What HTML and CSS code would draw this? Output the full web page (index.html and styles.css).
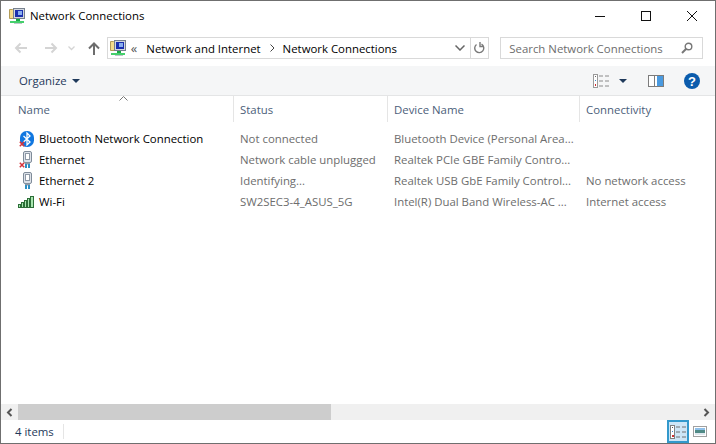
FILE: index.html
```html
<!DOCTYPE html>
<html lang="en">
<head>
    <meta charset="UTF-8">
    <title>Network Connections</title>
    <link rel="stylesheet" href="styles.css">
</head>
<body>
    <svg class="defs" width="0" height="0">
        <symbol id="netfolder" viewBox="0 0 16 16">
            <path d="M0.500 1.500h3l1 1h3v8h-7z" fill="#f5dc8a" stroke="#b39c58"/>
            <rect x="4.500" y="0.500" width="11" height="10" fill="#d3d8de" stroke="#77818e"/>
            <rect x="6" y="2" width="8" height="7" fill="#1a2fae"/>
            <rect x="9" y="3" width="4" height="4" fill="#8aaeee"/>
            <rect x="7" y="11" width="4" height="2" fill="#18a843"/>
            <rect x="1" y="13" width="14" height="2" fill="#45cf6c"/>
            <rect x="5" y="15" width="8" height="1" fill="#bfc5cb"/>
        </symbol>
        <symbol id="plug" viewBox="0 0 16 17">
            <rect x="5.500" y="0.500" width="8" height="11" rx="1.500" fill="#dde2e9" stroke="#7f8b99"/>
            <rect x="7.500" y="2.500" width="4" height="6" fill="#fff" stroke="#8e99a6"/>
            <rect x="7" y="11.500" width="5" height="2" fill="#8e99a6"/>
            <rect x="7" y="13" width="2" height="4" fill="#2d8fc4"/>
            <rect x="10" y="13" width="2" height="4" fill="#2d8fc4"/>
        </symbol>
        <symbol id="redx" viewBox="0 0 6 6">
            <path d="M0.800 0.800l4.400 4.400M5.200 0.800l-4.400 4.400" stroke="#d5333c" stroke-width="1.500" fill="none"/>
        </symbol>
    </svg>

    <div class="window">
        <header class="titlebar">
            <svg class="app-icon" width="16" height="16"><use href="#netfolder"/></svg>
            <span class="title">Network Connections</span>
            <div class="caption">
                <svg width="46" height="30" viewBox="0 0 46 30"><path d="M18 15.500h10" stroke="#111"/></svg>
                <svg width="46" height="30" viewBox="0 0 46 30"><rect x="18.500" y="10.500" width="9" height="9" fill="none" stroke="#111"/></svg>
                <svg width="46" height="30" viewBox="0 0 46 30"><path d="M18 10l10 10M28 10l-10 10" stroke="#111" fill="none"/></svg>
            </div>
        </header>

        <nav class="navbar">
            <div class="nav-buttons">
                <svg width="14" height="12" viewBox="0 0 14 12"><path d="M13 6H2M6.500 1.500L2 6l4.500 4.500" stroke="#d4d4d4" stroke-width="2" fill="none"/></svg>
                <svg width="14" height="12" viewBox="0 0 14 12"><path d="M1 6h11M7.500 1.500L12 6l-4.500 4.500" stroke="#d4d4d4" stroke-width="2" fill="none"/></svg>
                <svg width="7" height="5" viewBox="0 0 7 5"><path d="M0.500 0.500L3.500 3.500L6.500 0.500" stroke="#d4d4d4" stroke-width="1.300" fill="none"/></svg>
                <svg width="12" height="13" viewBox="0 0 12 13"><path d="M6 13V2M1 6.500L6 1.500l5 5" stroke="#6d6d6d" stroke-width="2" fill="none"/></svg>
            </div>
            <div class="address">
                <svg class="address-icon" width="16" height="16"><use href="#netfolder"/></svg>
                <span class="crumb-more">&laquo;</span>
                <span class="crumb crumb-first">Network and Internet</span>
                <svg class="crumb-sep" width="5" height="8" viewBox="0 0 5 8"><path d="M0.500 0.500L4 4L0.500 7.500" stroke="#444" fill="none"/></svg>
                <span class="crumb">Network Connections</span>
                <svg class="address-drop" width="10" height="6" viewBox="0 0 10 6"><path d="M0.500 0.500L5 5l4.500-4.500" stroke="#666" stroke-width="1.500" fill="none"/></svg>
                <div class="refresh">
                    <svg width="11" height="12" viewBox="0 0 11 12"><path d="M7.500 2.200A4.500 4.500 0 1 1 2.500 2.500M6 0v4.500h4" stroke="#7a7a7a" stroke-width="1.400" fill="none"/></svg>
                </div>
            </div>
            <div class="search">
                <span>Search Network Connections</span>
                <svg width="12" height="12" viewBox="0 0 12 12"><circle cx="7.500" cy="4.500" r="3.300" stroke="#777" stroke-width="1.400" fill="none"/><path d="M5 7L1 11" stroke="#777" stroke-width="2"/></svg>
            </div>
        </nav>

        <div class="toolbar">
            <button class="organize">Organize <span class="caret"></span></button>
            <div class="tools">
                <svg class="views" width="17" height="14" viewBox="0 0 17 14">
                    <rect x="0.500" y="0.500" width="4" height="13" fill="#fff" stroke="#9a9a9a"/>
                    <rect x="2" y="2" width="1" height="1" fill="#666"/>
                    <rect x="2" y="6" width="1" height="1" fill="#3a8ad0"/>
                    <rect x="2" y="10" width="1" height="2" fill="#d03030"/>
                    <path d="M6 2h4M12 2h4M6 7h4M12 7h4M6 12h4M12 12h4" stroke="#8a8a8a"/>
                </svg>
                <span class="caret views-caret"></span>
                <svg class="pane" width="16" height="12" viewBox="0 0 16 12">
                    <rect x="0.500" y="0.500" width="15" height="11" fill="#fff" stroke="#7c7c7c"/>
                    <rect x="9" y="1" width="6" height="10" fill="#4a9ae0"/>
                    <path d="M6.500 1v10" stroke="#7c7c7c"/>
                </svg>
                <svg class="help" width="16" height="16" viewBox="0 0 16 16">
                    <circle cx="8" cy="8" r="8" fill="#0b5cad"/>
                    <text x="8" y="12.500" text-anchor="middle" class="help-mark">?</text>
                </svg>
            </div>
        </div>

        <div class="columns">
            <div class="col col-name">Name
                <svg class="sort" width="9" height="5" viewBox="0 0 9 5"><path d="M0.500 4.500L4.500 0.500l4 4" stroke="#777" fill="none"/></svg>
            </div>
            <div class="col col-status">Status</div>
            <div class="col col-device">Device Name</div>
            <div class="col col-conn">Connectivity</div>
        </div>

        <main class="list">
            <div class="row">
                <div class="cell-name">
                    <span class="row-icon">
                        <svg width="14" height="16" viewBox="0 0 14 16">
                            <rect x="0" y="0" width="14" height="16" rx="6.500" fill="#1177e0"/>
                            <path d="M3.500 5l6.500 6-3 3V2l3 3-6.500 6" stroke="#fff" stroke-width="1.300" fill="none"/>
                        </svg>
                        <svg class="x" width="6" height="6"><use href="#redx"/></svg>
                    </span>
                    <span class="name">Bluetooth Network Connection</span>
                </div>
                <div class="cell-status">Not connected</div>
                <div class="cell-device">Bluetooth Device (Personal Area...</div>
                <div class="cell-conn"></div>
            </div>
            <div class="row">
                <div class="cell-name">
                    <span class="row-icon">
                        <svg width="16" height="17"><use href="#plug"/></svg>
                        <svg class="x" width="6" height="6"><use href="#redx"/></svg>
                    </span>
                    <span class="name">Ethernet</span>
                </div>
                <div class="cell-status">Network cable unplugged</div>
                <div class="cell-device">Realtek PCIe GBE Family Contro...</div>
                <div class="cell-conn"></div>
            </div>
            <div class="row">
                <div class="cell-name">
                    <span class="row-icon">
                        <svg width="16" height="17"><use href="#plug"/></svg>
                    </span>
                    <span class="name">Ethernet 2</span>
                </div>
                <div class="cell-status">Identifying...</div>
                <div class="cell-device">Realtek USB GbE Family Control...</div>
                <div class="cell-conn">No network access</div>
            </div>
            <div class="row">
                <div class="cell-name">
                    <span class="row-icon">
                        <svg class="wifi" width="16" height="12" viewBox="0 0 16 12">
                            <g fill="#a8e6b0" stroke="#2c6e38">
                                <rect x="0.500" y="8.500" width="2" height="3"/>
                                <rect x="3.500" y="6.500" width="2" height="5"/>
                                <rect x="6.500" y="4.500" width="2" height="7"/>
                                <rect x="9.500" y="2.500" width="2" height="9"/>
                                <rect x="12.500" y="0.500" width="3" height="11"/>
                            </g>
                        </svg>
                    </span>
                    <span class="name">Wi-Fi</span>
                </div>
                <div class="cell-status">SW2SEC3-4_ASUS_5G</div>
                <div class="cell-device">Intel(R) Dual Band Wireless-AC ...</div>
                <div class="cell-conn">Internet access</div>
            </div>
        </main>

        <div class="hscroll">
            <div class="scroll-btn">
                <svg width="7" height="9" viewBox="0 0 7 9"><path d="M5.500 1L2 4.500 5.500 8" stroke="#555" stroke-width="2" fill="none"/></svg>
            </div>
            <div class="scroll-thumb"></div>
            <div class="scroll-track"></div>
            <div class="scroll-btn">
                <svg width="7" height="9" viewBox="0 0 7 9"><path d="M1.500 1L5 4.500 1.500 8" stroke="#555" stroke-width="2" fill="none"/></svg>
            </div>
        </div>

        <footer class="statusbar">
            <span class="count">4 items</span>
            <div class="view-switch">
                <div class="view-btn active">
                    <svg width="16" height="14" viewBox="0 0 16 14">
                        <rect x="0.500" y="0.500" width="4" height="13" fill="#fff" stroke="#808080"/>
                        <rect x="2" y="2" width="1" height="1" fill="#555"/>
                        <rect x="2" y="6" width="1" height="1" fill="#3a8ad0"/>
                        <rect x="2" y="10" width="2" height="2" fill="#d03030"/>
                        <path d="M6 2h4M12 2h4M6 7h4M12 7h4M6 12h4M12 12h4" stroke="#707070"/>
                    </svg>
                </div>
                <div class="view-btn">
                    <svg width="14" height="11" viewBox="0 0 14 11">
                        <rect x="0.500" y="0.500" width="13" height="10" fill="#fff" stroke="#a0a0a0"/>
                        <rect x="2" y="2" width="10" height="2" fill="#8fc0ea"/>
                        <rect x="2" y="4" width="10" height="3" fill="#4f8a86"/>
                        <rect x="2" y="7" width="10" height="2" fill="#dfe8ee"/>
                    </svg>
                </div>
            </div>
        </footer>
    </div>
</body>
</html>
```

FILE: styles.css
```css
* {
    box-sizing: border-box;
}
html, body {
    margin: 0;
    height: 100%;
}
body {
    font-family: "Open Sans", "Noto Sans", sans-serif;
    font-size: 11.4px;
    color: #000;
    background: #fff;
}
svg {
    display: block;
    flex: none;
}
.defs {
    position: absolute;
}
.window {
    width: 716px;
    height: 444px;
    border: 1px solid #6f6f6f;
    display: flex;
    flex-direction: column;
    overflow: hidden;
}

/* title bar */
.titlebar {
    display: flex;
    align-items: center;
    height: 29px;
    flex: none;
    padding-left: 8px;
}
.title {
    margin-left: 5px;
}
.caption {
    display: flex;
    margin-left: auto;
}

/* back / forward + address + search */
.navbar {
    display: flex;
    align-items: center;
    height: 36px;
    flex: none;
    padding-right: 12px;
}
.nav-buttons {
    display: flex;
    align-items: center;
    gap: 16px;
    width: 106px;
    padding-left: 13px;
}
.nav-buttons svg:nth-child(3) {
    margin-left: -6px;
}
.nav-buttons svg:nth-child(4) {
    margin-left: -3px;
}
.address {
    display: flex;
    align-items: center;
    width: 383px;
    height: 22px;
    border: 1px solid #d9d9d9;
    padding-left: 2px;
}
.crumb-more {
    margin-left: 5px;
    font-size: 13px;
    line-height: 1;
    color: #555;
}
.crumb {
    margin-left: 8px;
}
.crumb-first {
    margin-left: 9px;
}
.crumb-sep {
    margin-left: 9px;
}
.address-drop {
    margin-left: auto;
    margin-right: 5px;
}
.refresh {
    display: flex;
    align-items: center;
    justify-content: center;
    width: 18px;
    height: 20px;
    border-left: 1px solid #d9d9d9;
}
.search {
    display: flex;
    align-items: center;
    justify-content: space-between;
    width: 203px;
    height: 22px;
    margin-left: 11px;
    padding: 0 9px 0 8px;
    border: 1px solid #d9d9d9;
    color: #6d6d6d;
}

/* command bar */
.toolbar {
    display: flex;
    align-items: center;
    justify-content: space-between;
    height: 30px;
    flex: none;
    background: #f5f6f7;
    border-bottom: 1px solid #e4e5e6;
}
.organize {
    display: flex;
    align-items: center;
    gap: 5px;
    margin-left: 18px;
    padding: 0;
    border: none;
    background: none;
    font: inherit;
    color: #1e395b;
}
.caret {
    display: block;
    width: 0;
    height: 0;
    border-left: 4px solid transparent;
    border-right: 4px solid transparent;
    border-top: 4px solid #1e395b;
}
.tools {
    display: flex;
    align-items: center;
    margin-right: 15px;
}
.views-caret {
    margin-left: 9px;
}
.pane {
    margin-left: 21px;
}
.help {
    margin-left: 20px;
}
.help-mark {
    font-family: "Liberation Sans", sans-serif;
    font-size: 13px;
    font-weight: bold;
    fill: #fff;
}

/* details view */
.columns {
    display: grid;
    grid-template-columns: 233px 154px 192px 1fr;
    height: 26px;
    flex: none;
    color: #4c607a;
}
.col {
    display: flex;
    align-items: center;
    position: relative;
    padding-left: 6px;
    border-right: 1px solid #e5e5e5;
}
.col-name {
    padding-left: 17px;
}
.col-conn {
    border-right: none;
}
.sort {
    position: absolute;
    left: 118px;
    top: 0;
}
.list {
    flex: 1;
    padding-top: 6px;
}
.row {
    display: grid;
    grid-template-columns: 233px 154px 192px 1fr;
    height: 21px;
    align-items: center;
    color: #6d6d6d;
    white-space: nowrap;
}
.cell-name {
    display: flex;
    align-items: center;
    padding-left: 17px;
    color: #000;
}
.row-icon {
    position: relative;
    display: flex;
    justify-content: flex-end;
    width: 16px;
    margin-right: 5px;
}
.wifi {
    margin-left: 1px;
}
.x {
    position: absolute;
    left: 1px;
    bottom: 0;
}
.cell-status, .cell-device, .cell-conn {
    padding-left: 6px;
}

/* bottom */
.hscroll {
    display: flex;
    height: 16px;
    flex: none;
    background: #f0f0f0;
}
.scroll-btn {
    display: flex;
    align-items: center;
    justify-content: center;
    width: 17px;
}
.scroll-thumb {
    width: 313px;
    background: #cdcdcd;
}
.scroll-track {
    flex: 1;
}
.statusbar {
    display: flex;
    align-items: center;
    justify-content: space-between;
    height: 23px;
    flex: none;
    padding-left: 14px;
    color: #1e395b;
}
.count {
    padding-right: 9px;
    border-right: 1px solid #e5e5e5;
}
.view-switch {
    display: flex;
    align-items: center;
    margin-right: 4px;
}
.view-btn {
    display: flex;
    align-items: center;
    justify-content: center;
    width: 22px;
    height: 23px;
}
.view-btn.active {
    background: #cde6f7;
    border: 2px solid #3399cc;
}
```
